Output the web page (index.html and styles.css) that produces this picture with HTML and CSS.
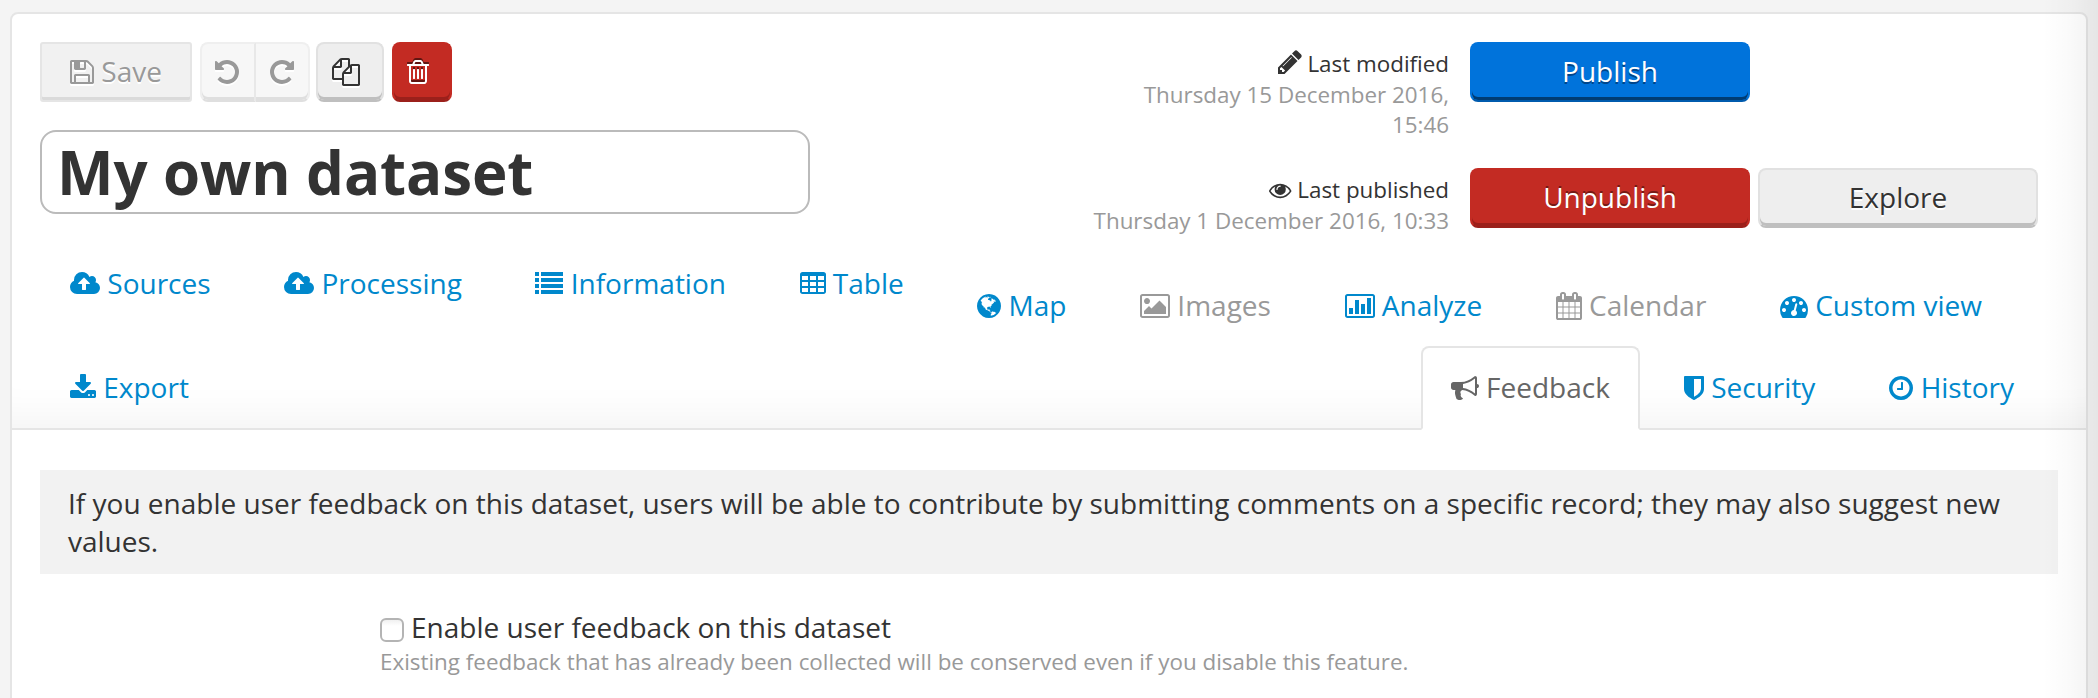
FILE: index.html
```html
<!DOCTYPE html>
<html lang="en">
<head>
<meta charset="utf-8">
<title>My own dataset</title>
<link rel="stylesheet" href="styles.css">
</head>
<body>
<main class="card">
  <header class="header">
    <div class="top">
      <div class="identity">
        <div class="toolbar">
          <button class="btn btn-save"><svg class="icon" viewBox="128 0 1536 1792"><path d="M512 1536h768v-384h-768v384zm896 0h128v-896q0-14-10-38.5t-20-34.5l-281-281q-10-10-34-20t-39-10v416q0 40-28 68t-68 28h-576q-40 0-68-28t-28-68v-416h-128v1280h128v-416q0-40 28-68t68-28h832q40 0 68 28t28 68v416zm-384-928v-320q0-13-9.5-22.5t-22.5-9.5h-192q-13 0-22.5 9.5t-9.5 22.5v320q0 13 9.5 22.5t22.5 9.5h192q13 0 22.5-9.5t9.5-22.5zm640 32v928q0 40-28 68t-68 28h-1344q-40 0-68-28t-28-68v-1344q0-40 28-68t68-28h928q40 0 88 20t76 48l280 280q28 28 48 76t20 88z"/></svg> Save</button>
          <div class="btn-group">
            <button class="btn btn-step" aria-label="Undo"><svg class="icon" viewBox="128 0 1536 1792"><path d="M1664 896q0 156-61 298t-164 245-245 164-298 61q-172 0-327-72.5t-264-204.5q-7-10-6.5-22.5t8.5-20.5l137-138q10-9 25-9 16 2 23 12 73 95 179 147t225 52q104 0 198.5-40.5t163.5-109.5 109.5-163.5 40.5-198.5-40.5-198.5-109.5-163.5-163.5-109.5-198.5-40.5q-98 0-188 35.5t-160 101.5l137 138q31 30 14 69-17 40-59 40h-448q-26 0-45-19t-19-45v-448q0-42 40-59 39-17 69 14l130 129q107-101 244.5-156.5t284.5-55.5q156 0 298 61t245 164 164 245 61 298z"/></svg></button>
            <button class="btn btn-step" aria-label="Redo"><svg class="icon icon-mirrored" viewBox="128 0 1536 1792"><path d="M1664 896q0 156-61 298t-164 245-245 164-298 61q-172 0-327-72.5t-264-204.5q-7-10-6.5-22.5t8.5-20.5l137-138q10-9 25-9 16 2 23 12 73 95 179 147t225 52q104 0 198.5-40.5t163.5-109.5 109.5-163.5 40.5-198.5-40.5-198.5-109.5-163.5-163.5-109.5-198.5-40.5q-98 0-188 35.5t-160 101.5l137 138q31 30 14 69-17 40-59 40h-448q-26 0-45-19t-19-45v-448q0-42 40-59 39-17 69 14l130 129q107-101 244.5-156.5t284.5-55.5q156 0 298 61t245 164 164 245 61 298z"/></svg></button>
          </div>
          <button class="btn btn-copy" aria-label="Duplicate"><svg class="icon" viewBox="0 0 1792 1792"><path d="M1696 384q40 0 68 28t28 68v1216q0 40-28 68t-68 28h-960q-40 0-68-28t-28-68v-288h-544q-40 0-68-28t-28-68v-672q0-40 20-88t48-76l408-408q28-28 76-48t88-20h416q40 0 68 28t28 68v328q68-40 128-40h416zm-544 213l-299 299h299v-299zm-640-384l-299 299h299v-299zm196 647l316-316v-416h-384v416q0 40-28 68t-68 28h-416v640h512v-256q0-40 20-88t48-76zm956 804v-1152h-384v416q0 40-28 68t-68 28h-416v640h896z"/></svg></button>
          <button class="btn btn-danger btn-trash" aria-label="Delete"><svg class="icon" viewBox="192 0 1408 1792"><path d="M704 736v576q0 14-9 23t-23 9h-64q-14 0-23-9t-9-23v-576q0-14 9-23t23-9h64q14 0 23 9t9 23zm256 0v576q0 14-9 23t-23 9h-64q-14 0-23-9t-9-23v-576q0-14 9-23t23-9h64q14 0 23 9t9 23zm256 0v576q0 14-9 23t-23 9h-64q-14 0-23-9t-9-23v-576q0-14 9-23t23-9h64q14 0 23 9t9 23zm128 724v-948h-896v948q0 22 7 40.5t14.5 27 10.5 8.5h832q3 0 10.5-8.5t14.5-27 7-40.5zm-672-1076h448l-48-117q-7-9-17-11h-317q-10 2-17 11zm928 32v64q0 14-9 23t-23 9h-96v948q0 83-47 143.5t-113 60.5h-832q-66 0-113-58.5t-47-141.5v-952h-96q-14 0-23-9t-9-23v-64q0-14 9-23t23-9h309l70-167q15-37 54-63t79-26h320q40 0 79 26t54 63l70 167h309q14 0 23 9t9 23z"/></svg></button>
        </div>
        <h1 class="title">My own dataset</h1>
      </div>
      <div class="status">
        <div class="meta">
          <p class="meta-label"><svg class="icon icon-pencil" viewBox="128 0 1536 1792"><path d="M491 1536l91-91-235-235-91 91v107h128v128h107zm523-928q0-22-22-22-10 0-17 7l-542 542q-7 7-7 17 0 22 22 22 10 0 17-7l542-542q7-7 7-17zm-54-192l416 416-832 832h-416v-416zm683 96q0 53-37 90l-166 166-416-416 166-165q36-38 90-38 53 0 91 38l235 234q37 39 37 91z"/></svg> Last modified</p>
          <p class="meta-date">Thursday 15 December 2016,<br>15:46</p>
        </div>
        <div class="actions"><button class="btn btn-primary btn-wide">Publish</button></div>
        <div class="meta">
          <p class="meta-label"><svg class="icon icon-eye" viewBox="0 0 1792 1792"><path d="M1664 960q-152-236-381-353 61 104 61 225 0 185-131.5 316.5t-316.5 131.5-316.5-131.5-131.5-316.5q0-121 61-225-229 117-381 353 133 205 333.5 326.5t434.5 121.5 434.5-121.5 333.5-326.5zm-720-384q0-20-14-34t-34-14q-125 0-214.5 89.5t-89.5 214.5q0 20 14 34t34 14 34-14 14-34q0-86 61-147t147-61q20 0 34-14t14-34zm848 384q0 34-20 69-140 230-376.5 368.5t-499.5 138.5-499.5-139-376.5-368q-20-35-20-69t20-69q140-229 376.5-368t499.5-139 499.5 139 376.5 368q20 35 20 69z"/></svg> Last published</p>
          <p class="meta-date">Thursday 1 December 2016, 10:33</p>
        </div>
        <div class="actions"><button class="btn btn-danger btn-wide">Unpublish</button><button class="btn btn-wide">Explore</button></div>
      </div>
    </div>
    <nav class="tabs">
      <div class="tab-row tab-row-first">
        <a class="tab"><svg class="icon" viewBox="0 0 1920 1792"><path d="M1280 864q0-14-9-23l-352-352q-9-9-23-9t-23 9l-351 351q-10 12-10 24 0 14 9 23t23 9h224v352q0 13 9.5 22.5t22.5 9.5h192q13 0 22.5-9.5t9.5-22.5v-352h224q13 0 22.5-9.5t9.5-22.5zm640 288q0 159-112.5 271.5t-271.5 112.5h-1088q-185 0-316.5-131.5t-131.5-316.5q0-130 70-240t188-165q-2-30-2-43 0-212 150-362t362-150q156 0 285.5 87t188.5 231q71-62 166-62 106 0 181 75t75 181q0 76-41 138 130 31 213.5 135.5t83.5 238.5z"/></svg> Sources</a>
        <a class="tab"><svg class="icon" viewBox="0 0 1920 1792"><path d="M1280 864q0-14-9-23l-352-352q-9-9-23-9t-23 9l-351 351q-10 12-10 24 0 14 9 23t23 9h224v352q0 13 9.5 22.5t22.5 9.5h192q13 0 22.5-9.5t9.5-22.5v-352h224q13 0 22.5-9.5t9.5-22.5zm640 288q0 159-112.5 271.5t-271.5 112.5h-1088q-185 0-316.5-131.5t-131.5-316.5q0-130 70-240t188-165q-2-30-2-43 0-212 150-362t362-150q156 0 285.5 87t188.5 231q71-62 166-62 106 0 181 75t75 181q0 76-41 138 130 31 213.5 135.5t83.5 238.5z"/></svg> Processing</a>
        <a class="tab"><svg class="icon" viewBox="0 0 1792 1792"><path d="M0 128h256v256H0zM384 128h1408v256H384zM0 512h256v256H0zM384 512h1408v256H384zM0 896h256v256H0zM384 896h1408v256H384zM0 1280h256v256H0zM384 1280h1408v256H384z"/></svg> Information</a>
        <a class="tab"><svg class="icon" viewBox="64 0 1664 1792"><path fill-rule="evenodd" d="M224 128h1344q66 0 113 47t47 113v1088q0 66-47 113t-113 47H224q-66 0-113-47t-47-113V288q0-66 47-113t113-47zM192 384v256h384V384zm512 0v256h384V384zm512 0v256h384V384zM192 768v256h384V768zm512 0v256h384V768zm512 0v256h384V768zM192 1152v256h384v-256zm512 0v256h384v-256zm512 0v256h384v-256z"/></svg> Table</a>
        <a class="tab tab-low"><svg class="icon" viewBox="128 0 1536 1792"><path d="M896 128q209 0 385.5 103t279.5 279.5 103 385.5-103 385.5-279.5 279.5-385.5 103-385.5-103-279.5-279.5-103-385.5 103-385.5 279.5-279.5 385.5-103zm274 521q-2 1-9.5 9.5t-13.5 9.5q2 0 4.5-5t5-11 3.5-7q6-7 22-15 14-6 52-12 34-8 51 11-2-2 9.5-13t14.5-12q3-2 15-4.5t15-7.5l2-22q-12 1-17.5-7t-6.5-21q0 2-6 8 0-7-4.5-8t-11.5 1-9 1q-10-3-15-7.5t-8-16.5-4-15q-2-5-9.5-11t-9.5-10q-1-2-2.5-5.5t-3-6.5-4-5.5-5.5-2.5-7 5-7.5 10-4.5 5q-3-2-6-1.5t-4.5 1-4.5 3-5 3.5q-3 2-8.5 3t-8.5 2q15-5-1-11-10-4-16-3 9-4 7.5-12t-8.5-14h5q-1-4-8.5-8.5t-17.5-8.5-13-6q-8-5-34-9.5t-33-.5q-5 6-4.5 10.5t4 14 3.5 12.5q1 6-5.5 13t-6.5 12q0 7 14 15.5t10 21.5q-3 8-16 16t-16 12q-5 8-1.5 18.5t10.5 16.5q2 2 1.5 4t-3.5 4.5-5.5 4-6.5 3.5l-3 2q-11 5-20.5-6t-13.5-26q-7-25-16-30-23-8-29 1-5-13-41-26-25-9-58-4 6-1 0-15-7-15-19-12 3-6 4-17.5t1-13.5q3-13 12-23 1-1 7-8.5t9.5-13.5.5-6q35 4 50-11 5-5 11.5-17t10.5-17q9-6 14-5.5t14.5 5.5 14.5 5q14 1 15.5-11t-7.5-20q12 1 3-17-4-7-8-9-12-4-27 5-8 4 2 8-1-1-9.5 10.5t-16.5 17.5-16-5q-1-1-5.5-13.5t-9.5-13.5q-8 0-16 15 3-8-11-15t-24-8q19-12-8-27-7-4-20.5-5t-19.5 4q-5 7-5.5 11.5t5 8 10.5 5.5 11.5 4 8.5 3q14 10 8 14-2 1-8.5 3.5t-11.5 4.5-6 4q-3 4 0 14t-2 14q-5-5-9-17.5t-7-16.5q7 9-25 6l-10-1q-4 0-16 2t-20.5 1-13.5-8q-4-8 0-20 1-4 4-2-4-3-11-9.5t-10-8.5q-46 15-94 41 6 1 12-1 5-2 13-6.5t10-5.5q34-14 42-7l5-5q14 16 20 25-7-4-30-1-20 6-22 12 7 12 5 18-4-3-11.5-10t-14.5-11-15-5q-16 0-22 1-146 80-235 222 7 7 12 8 4 1 5 9t2.5 11 11.5-3q9 8 3 19 1-1 44 27 19 17 21 21 3 11-10 18-1-2-9-9t-9-4q-3 5 .5 18.5t10.5 12.5q-7 0-9.5 16t-2.5 35.5-1 23.5l2 1q-3 12 5.5 34.5t21.5 19.5q-13 3 20 43 6 8 8 9 3 2 12 7.5t15 10 10 10.5q4 5 10 22.5t14 23.5q-2 6 9.5 20t10.5 23q-1 0-2.5 1t-2.5 1q3 7 15.5 14t15.5 13q1 3 2 10t3 11 8 2q2-20-24-62-15-25-17-29-3-5-5.5-15.5t-4.5-14.5q2 0 6 1.5t8.5 3.5 7.5 4 2 3q-3 7 2 17.5t12 18.5 17 19 12 13q6 6 14 19.5t0 13.5q9 0 20 10.5t17 19.5q5 8 8 26t5 24q2 7 8.5 13.5t12.5 9.5l16 8 13 7q5 2 18.5 10.5t21.5 11.5q10 4 16 4t14.5-2.5 13.5-3.5q15-2 29 15t21 21q36 19 55 11-2 1 .5 7.5t8 15.5 9 14.5 5.5 8.5q5 6 18 15t18 15q6-4 7-9-3 8 7 20t18 10q14-3 14-32-31 15-49-18 0-1-2.5-5.5t-4-8.5-2.5-8.5 0-7.5 5-3q9 0 10-3.5t-2-12.5-4-13q-1-8-11-20t-12-15q-5 9-16 8t-16-9q0 1-1.5 5.5t-1.5 6.5q-13 0-15-1 1-3 2.5-17.5t3.5-22.5q1-4 5.5-12t7.5-14.5 4-12.5-4.5-9.5-17.5-2.5q-19 1-26 20-1 3-3 10.5t-5 11.5-9 7q-7 3-24 2t-24-5q-13-8-22.5-29t-9.5-37q0-10 2.5-26.5t3-25-5.5-24.5q3-2 9-9.5t10-10.5q2-1 4.5-1.5t4.5 0 4-1.5 3-6q-1-1-4-3-3-3-4-3 7 3 28.5-1.5t27.5 1.5q15 11 22-2 0-1-2.5-9.5t-.5-13.5q5 27 29 9 3 3 15.5 5t17.5 5q3 2 7 5.5t5.5 4.5 5-.5 8.5-6.5q10 14 12 24 11 40 19 44 7 3 11 2t4.5-9.5 0-14-1.5-12.5l-1-8v-18l-1-8q-15-3-18.5-12t1.5-18.5 15-18.5q1-1 8-3.5t15.5-6.5 12.5-8q21-19 15-35 7 0 11-9-1 0-5-3t-7.5-5-4.5-2q9-5 2-16 5-3 7.5-11t7.5-10q9 12 21 2 7-8 1-16 5-7 20.5-10.5t18.5-9.5q7 2 8-2t1-12 3-12q4-5 15-9t13-5l17-11q3-4 0-4 18 2 31-11 10-11-6-20 3-6-3-9.5t-15-5.5q3-1 11.5-.5t10.5-1.5q15-10-7-16-17-5-43 12zm-163 877q206-36 351-189-3-3-12.5-4.5t-12.5-3.5q-18-7-24-8 1-7-2.5-13t-8-9-12.5-8-11-7q-2-2-7-6t-7-5.5-7.5-4.5-8.5-2-10 1l-3 1q-3 1-5.5 2.5t-5.5 3-4 3 0 2.5q-21-17-36-22-5-1-11-5.5t-10.5-7-10-1.5-11.5 7q-5 5-6 15t-2 13q-7-5 0-17.5t2-18.5q-3-6-10.5-4.5t-12 4.5-11.5 8.5-9 6.5-8.5 5.5-8.5 7.5q-3 4-6 12t-5 11q-2-4-11.5-6.5t-9.5-5.5q2 10 4 35t5 38q7 31-12 48-27 25-29 40-4 22 12 26 0 7-8 20.5t-7 21.5q0 6 2 16z"/></svg> Map</a>
        <a class="tab tab-low tab-disabled"><svg class="icon" viewBox="-64 0 1920 1792"><path d="M576 576q0 80-56 136t-136 56-136-56-56-136 56-136 136-56 136 56 56 136zm1024 384v448h-1408v-192l320-320 160 160 512-512zm96-704h-1600q-13 0-22.5 9.5t-9.5 22.5v1216q0 13 9.5 22.5t22.5 9.5h1600q13 0 22.5-9.5t9.5-22.5v-1216q0-13-9.5-22.5t-22.5-9.5zm160 32v1216q0 66-47 113t-113 47h-1600q-66 0-113-47t-47-113v-1216q0-66 47-113t113-47h1600q66 0 113 47t47 113z"/></svg> Images</a>
        <a class="tab tab-low"><svg class="icon" viewBox="-64 0 1920 1792"><path d="M192 1024h256v384H192zM576 512h256v896H576zM960 768h256v640H960zM1344 384h256v1024h-256zM1696 256h-1600q-13 0-22.5 9.5t-9.5 22.5v1216q0 13 9.5 22.5t22.5 9.5h1600q13 0 22.5-9.5t9.5-22.5v-1216q0-13-9.5-22.5t-22.5-9.5zm160 32v1216q0 66-47 113t-113 47h-1600q-66 0-113-47t-47-113v-1216q0-66 47-113t113-47h1600q66 0 113 47t47 113z"/></svg> Analyze</a>
        <a class="tab tab-low tab-disabled"><svg class="icon" viewBox="64 0 1664 1792"><path d="M192 1664h288v-288h-288v288zm352 0h320v-288h-320v288zm-352-352h288v-320h-288v320zm352 0h320v-320h-320v320zm-352-384h288v-288h-288v288zm736 736h320v-288h-320v288zm-384-736h320v-288h-320v288zm768 736h288v-288h-288v288zm-384-352h320v-320h-320v320zm-352-864v-288q0-13-9.5-22.5t-22.5-9.5h-64q-13 0-22.5 9.5t-9.5 22.5v288q0 13 9.5 22.5t22.5 9.5h64q13 0 22.5-9.5t9.5-22.5zm736 864h288v-320h-288v320zm-384-384h320v-288h-320v288zm384 0h288v-288h-288v288zm32-480v-288q0-13-9.5-22.5t-22.5-9.5h-64q-13 0-22.5 9.5t-9.5 22.5v288q0 13 9.5 22.5t22.5 9.5h64q13 0 22.5-9.5t9.5-22.5zm384-64v1280q0 52-38 90t-90 38h-1408q-52 0-90-38t-38-90v-1280q0-52 38-90t90-38h128v-96q0-66 47-113t113-47h64q66 0 113 47t47 113v96h384v-96q0-66 47-113t113-47h64q66 0 113 47t47 113v96h128q52 0 90 38t38 90z"/></svg> Calendar</a>
        <a class="tab tab-low"><svg class="icon" viewBox="0 0 1792 1792"><path d="M384 1152q0-53-37.5-90.5t-90.5-37.5-90.5 37.5-37.5 90.5 37.5 90.5 90.5 37.5 90.5-37.5 37.5-90.5zm192-448q0-53-37.5-90.5t-90.5-37.5-90.5 37.5-37.5 90.5 37.5 90.5 90.5 37.5 90.5-37.5 37.5-90.5zm428 481l101-382q6-26-7.5-48.5t-38.5-29.5-48 6.5-30 39.5l-101 382q-60 5-107 43.5t-63 98.5q-20 77 20 146t117 89 146-20 89-117q16-60-6-117t-72-91zm660-33q0-53-37.5-90.5t-90.5-37.5-90.5 37.5-37.5 90.5 37.5 90.5 90.5 37.5 90.5-37.5 37.5-90.5zm-640-640q0-53-37.5-90.5t-90.5-37.5-90.5 37.5-37.5 90.5 37.5 90.5 90.5 37.5 90.5-37.5 37.5-90.5zm448 192q0-53-37.5-90.5t-90.5-37.5-90.5 37.5-37.5 90.5 37.5 90.5 90.5 37.5 90.5-37.5 37.5-90.5zm320 448q0 261-141 483-19 29-54 29h-1402q-35 0-54-29-141-221-141-483 0-182 71-348t191-286 286-191 348-71 348 71 286 191 191 286 71 348z"/></svg> Custom view</a>
      </div>
      <div class="tab-row">
        <a class="tab tab-export"><svg class="icon" viewBox="64 0 1664 1792"><path d="M1344 1344q0-26-19-45t-45-19-45 19-19 45 19 45 45 19 45-19 19-45zm256 0q0-26-19-45t-45-19-45 19-19 45 19 45 45 19 45-19 19-45zm128-224v320q0 40-28 68t-68 28h-1472q-40 0-68-28t-28-68v-320q0-40 28-68t68-28h465l135 136q58 56 136 56t136-56l136-136h464q40 0 68 28t28 68zm-325-569q17 41-14 70l-448 448q-18 19-45 19t-45-19l-448-448q-31-29-14-70 17-39 59-39h256v-448q0-26 19-45t45-19h256q26 0 45 19t19 45v448h256q42 0 59 39z"/></svg> Export</a>
        <a class="tab tab-active"><svg class="icon" viewBox="0 0 1792 1792"><path d="M1664 640q53 0 90.5 37.5t37.5 90.5-37.5 90.5-90.5 37.5v384q0 52-38 90t-90 38q-417-347-812-380-58 19-91 66t-31 100.5 40 92.5q-20 33-23 65.5t6 58 33.5 55 48 50 61.5 50.5q-29 58-111.5 83t-168.5 11.5-132-55.5q-7-23-29.5-87.5t-32-94.5-23-89-15-101 3.5-98.5 22-110.5h-122q-66 0-113-47t-47-113v-192q0-66 47-113t113-47h480q435 0 896-384 52 0 90 38t38 90v384zm-128 604v-954q-394 302-768 343v270q377 42 768 341z"/></svg> Feedback</a>
        <a class="tab"><svg class="icon" viewBox="256 0 1280 1792"><path d="M1344 960v-640h-448v1137q119-63 213-137 235-184 235-360zm192-768v768q0 86-33.5 170.5t-83 150-118 127.5-126.5 103-121 77.5-89.5 49.5-42.5 20q-12 6-26 6t-26-6q-16-7-42.5-20t-89.5-49.5-121-77.5-126.5-103-118-127.5-83-150-33.5-170.5v-768q0-26 19-45t45-19h1152q26 0 45 19t19 45z"/></svg> Security</a>
        <a class="tab"><svg class="icon" viewBox="128 0 1536 1792"><path d="M1024 544v448q0 14-9 23t-23 9h-320q-14 0-23-9t-9-23v-64q0-14 9-23t23-9h224v-352q0-14 9-23t23-9h64q14 0 23 9t9 23zm416 352q0-148-73-273t-198-198-273-73-273 73-198 198-73 273 73 273 198 198 273 73 273-73 198-198 73-273zm224 0q0 209-103 385.5t-279.5 279.5-385.5 103-385.5-103-279.5-279.5-103-385.5 103-385.5 279.5-279.5 385.5-103 385.5 103 279.5 279.5 103 385.5z"/></svg> History</a>
      </div>
    </nav>
  </header>
  <section class="content">
    <p class="notice">If you enable user feedback on this dataset, users will be able to contribute by submitting comments on a specific record; they may also suggest new values.</p>
    <div class="field">
      <label class="check"><input class="checkbox" type="checkbox">Enable user feedback on this dataset</label>
      <p class="help">Existing feedback that has already been collected will be conserved even if you disable this feature.</p>
    </div>
  </section>
</main>
<div class="edge-shadow"></div>
</body>
</html>
```
FILE: styles.css
```css
* { box-sizing: border-box; }

body {
  position: relative;
  height: 698px;
  margin: 0;
  padding: 12px 10px 0;
  overflow: hidden;
  background: #f4f4f4;
  color: #333;
  font: 28px/38px "Open Sans", "Noto Sans", sans-serif;
}

p, h1 { margin: 0; }

.card {
  height: 720px;
  border: 2px solid #e5e5e5;
  border-radius: 8px;
  background: #fff;
}

.header {
  height: 416px;
  padding: 28px 28px 0;
  border-bottom: 2px solid #e5e5e5;
  box-shadow: inset 0 -50px 40px -40px rgba(0, 0, 0, .05);
}

.top {
  display: flex;
  justify-content: space-between;
  height: 200px;
}

.identity { width: 770px; }

.toolbar {
  display: flex;
  height: 60px;
}

.icon {
  height: 28px;
  vertical-align: -4px;
  fill: currentColor;
  overflow: visible;
}
.icon-mirrored { transform: scaleX(-1); }

.btn {
  height: 60px;
  padding: 0 0 2px;
  border: 2px solid #e1e1e1;
  border-bottom-color: #bfbfbf;
  border-radius: 8px;
  background: #eee;
  box-shadow: inset 0 -3px 0 #bfbfbf;
  color: #333;
  font: inherit;
  line-height: 54px;
  text-shadow: 0 2px 0 #fff;
}
.btn .icon { filter: drop-shadow(0 2px 0 #fff); }

.btn-save {
  width: 152px;
  border-color: #e5e5e5;
  border-radius: 3px;
  background: #f1f1f1;
  box-shadow: inset 0 -3px 0 #dadada;
  color: #999;
}

.btn-group {
  display: flex;
  margin: 0 6px 0 8px;
}
.btn-step {
  width: 56px;
  border-color: #efefef;
  border-bottom-color: #dfdfdf;
  border-radius: 8px 0 0 8px;
  background: #f7f7f7;
  box-shadow: inset 0 -3px 0 #dfdfdf;
  color: #999;
}
.btn-step + .btn-step {
  width: 54px;
  border-left: 0;
  border-radius: 0 8px 8px 0;
}
.btn-step:first-child {
  padding-right: 2px;
  border-right-color: #e8e8e8;
}

.btn-copy {
  width: 68px;
  padding-right: 8px;
  margin-right: 8px;
}

.btn-danger {
  border-color: #c32b23 #c32b23 #9b201b;
  background: #c32b23;
  box-shadow: inset 0 -3px 0 #9b201b;
  color: #fff;
  text-shadow: 0 -2px 0 #751a15;
}
.btn-danger .icon { filter: drop-shadow(0 -2px 0 #611511); }
.btn-trash {
  width: 60px;
  padding-right: 8px;
}

.btn-primary {
  border-color: #0073db #0073db #005bad;
  background: #0073db;
  box-shadow: inset 0 -3px 0 #003c73;
  color: #fff;
  text-shadow: 0 2px 0 #00458a;
}
.btn-wide { width: 280px; }

.title {
  height: 84px;
  margin-top: 28px;
  padding-left: 15px;
  border: 2px solid #bbb;
  border-radius: 16px;
  font-size: 60px;
  font-weight: 700;
  line-height: 81px;
  letter-spacing: -.1px;
}

.status {
  display: grid;
  grid-template-columns: 400px 588px;
  grid-template-rows: 126px 60px;
  column-gap: 21px;
}
.actions {
  display: flex;
  gap: 8px;
}
.meta {
  padding-top: 6px;
  font-size: 22.4px;
  line-height: 30px;
  text-align: right;
}
.meta-label { height: 32px; line-height: 32px; }
.meta-date { color: #999; white-space: nowrap; }
.icon-eye { height: 22.4px; vertical-align: -3px; }

.tab-row {
  display: flex;
  gap: 14px;
  height: 84px;
  padding-right: 14px;
}
.tab-row-first {
  gap: 13.6px;
  height: 104px;
}
.tab {
  height: 84px;
  padding: 20px 28px 0;
  border: 2px solid transparent;
  color: #08c;
  white-space: nowrap;
}
.tab-low { margin-top: 22px; }
.tab-disabled { color: #999; }
.tab-export { margin-right: auto; }
.tab-active {
  border-color: #e5e5e5;
  border-bottom-color: #fff;
  border-radius: 8px 8px 0 0;
  background: #fff;
  color: #666;
}

.content { padding: 40px 28px 0; }
.notice {
  padding: 14px 28px;
  background: #f2f2f2;
}
.field {
  margin-top: 34px;
  padding-left: 340px;
}
.check {
  display: flex;
  align-items: flex-start;
  gap: 7px;
  height: 38px;
}
.checkbox {
  appearance: none;
  width: 24px;
  height: 24px;
  margin: 10px 0 0;
  border: 2px solid #b4b4b4;
  border-radius: 6px;
  background: linear-gradient(#f0f0f0, #fff 30%);
}
.help {
  color: #999;
  font-size: 22.4px;
  line-height: 32px;
}

.edge-shadow {
  position: absolute;
  top: 0;
  right: 0;
  width: 56px;
  height: 698px;
  background: linear-gradient(to right, transparent, rgba(0, 0, 0, .02) 50%, rgba(0, 0, 0, .06));
}
```
